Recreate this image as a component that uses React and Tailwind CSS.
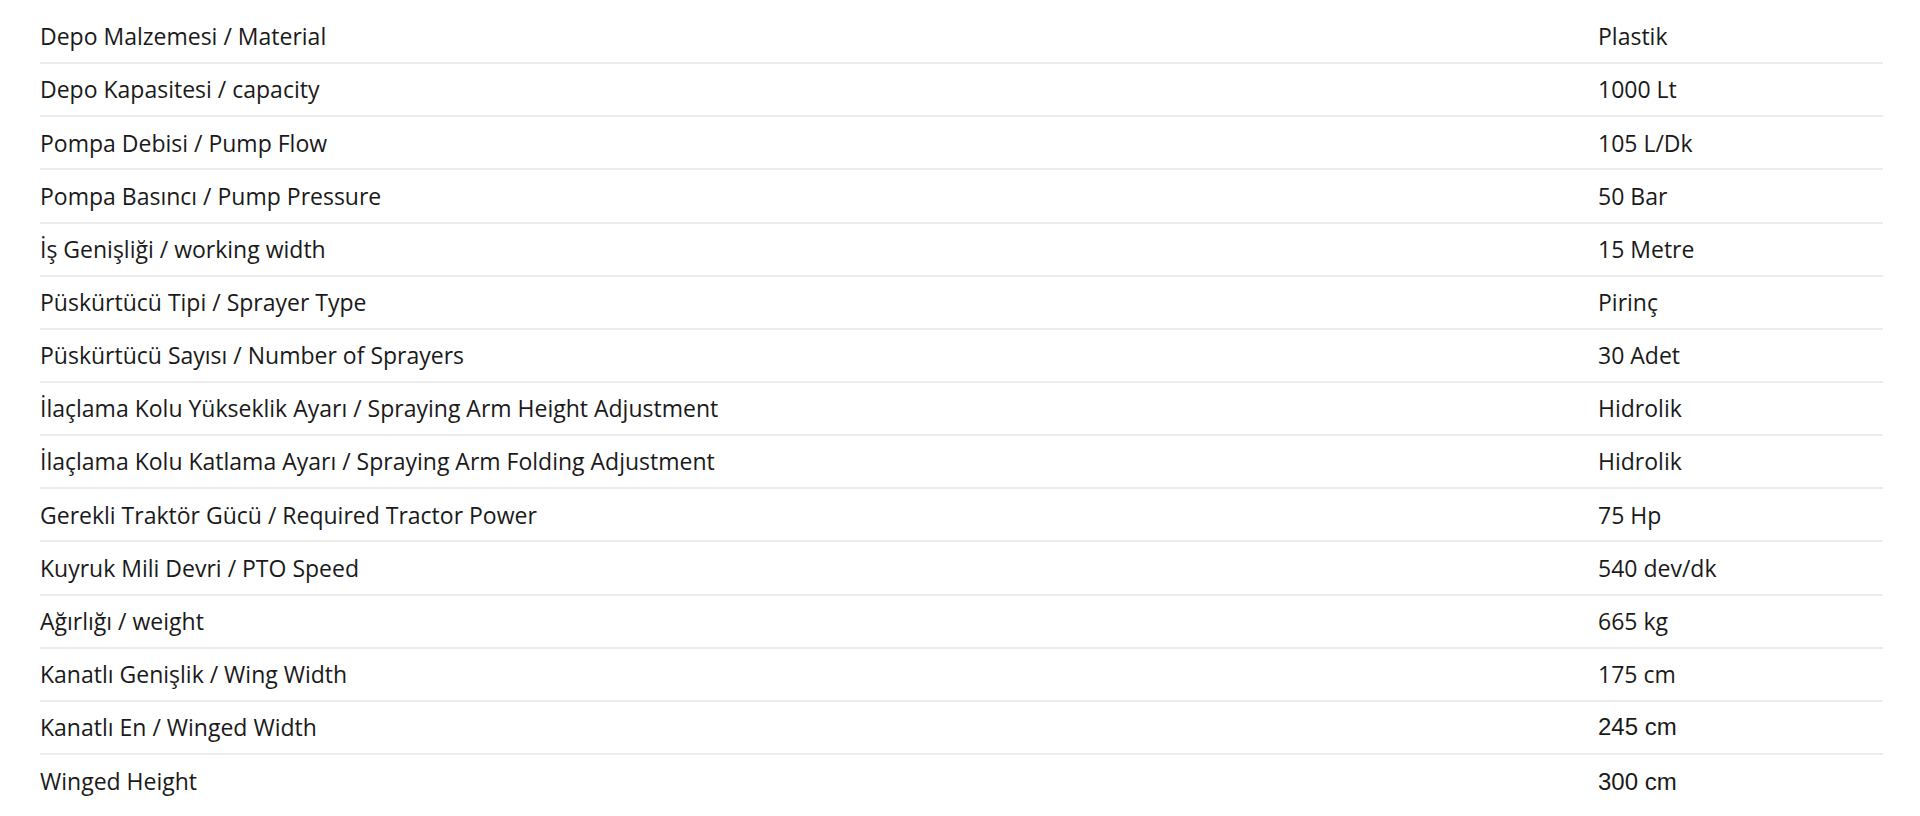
import React from "react";

const specs = [
    ["Depo Malzemesi / Material", "Plastik"],
    ["Depo Kapasitesi / capacity", "1000 Lt"],
    ["Pompa Debisi / Pump Flow", "105 L/Dk"],
    ["Pompa Basıncı / Pump Pressure", "50 Bar"],
    ["İş Genişliği / working width", "15 Metre"],
    ["Püskürtücü Tipi / Sprayer Type", "Pirinç"],
    ["Püskürtücü Sayısı / Number of Sprayers", "30 Adet"],
    ["İlaçlama Kolu Yükseklik Ayarı / Spraying Arm Height Adjustment", "Hidrolik"],
    ["İlaçlama Kolu Katlama Ayarı / Spraying Arm Folding Adjustment", "Hidrolik"],
    ["Gerekli Traktör Gücü / Required Tractor Power", "75 Hp"],
    ["Kuyruk Mili Devri / PTO Speed", "540 dev/dk"],
    ["Ağırlığı / weight", "665 kg"],
    ["Kanatlı Genişlik / Wing Width", "175 cm"],
    ["Kanatlı En / Winged Width", "245 cm", true],
    ["Winged Height", "300 cm", true],
];

export default function App() {
    return (
        <div className="min-h-screen bg-white pt-[11px] pl-[40px] pr-[37px] font-['Open_Sans',sans-serif] text-[23px] text-[#1a1a1a]">
            {specs.map(([label, value, plain], i) => (
                <div
                    key={i}
                    className={
                        "grid grid-cols-[1558px_1fr] items-center h-[53.15px] " +
                        (i < specs.length - 1 ? "border-b-2 border-[#ececec]" : "")
                    }
                >
                    <span>{label}</span>
                    <span className={plain ? "font-['Liberation_Sans',sans-serif] text-[24px]" : ""}>
                        {value}
                    </span>
                </div>
            ))}
        </div>
    );
}
